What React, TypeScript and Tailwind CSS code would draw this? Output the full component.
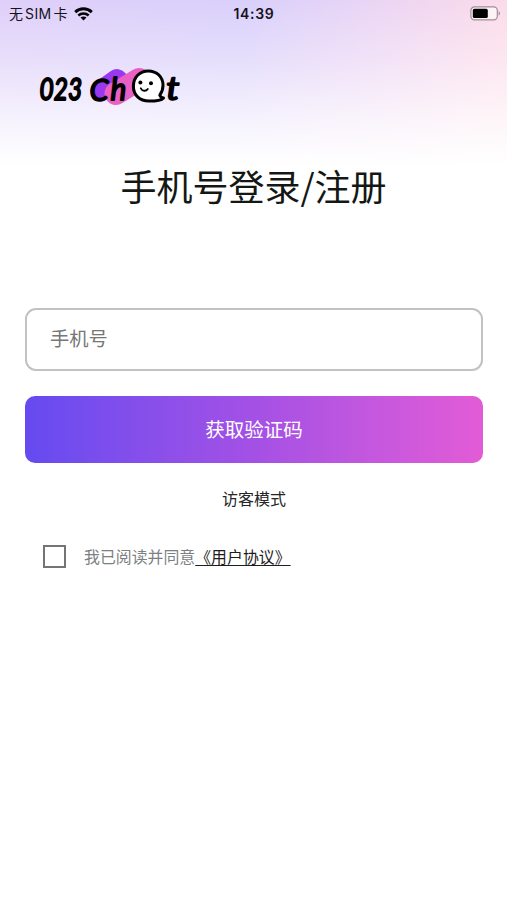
import { useState } from "react";

const WifiIcon = () => (
    <svg className="w-[19px] h-[14px]" viewBox="0 0 19 14" fill="none" stroke="#050307" strokeWidth="2.9">
        <path d="M1.2 5.1C5.9 0.7 13.1 0.7 17.8 5.1" />
        <path d="M4.3 8.5C7.3 5.8 11.7 5.8 14.7 8.5" strokeWidth="2.5" />
        <path d="M9.5 13.6L6.5 10.6C8.2 9.1 10.8 9.1 12.5 10.6Z" fill="#050307" stroke="none" />
    </svg>
);

const BatteryIcon = () => (
    <svg className="w-[31px] h-[15px]" viewBox="0 0 31 15" fill="none">
        <rect x="0.9" y="0.9" width="26.4" height="13" rx="3.6" fill="#fdf3f7" stroke="#9f8f98" strokeWidth="1.2" />
        <rect x="2.8" y="2.8" width="15" height="9.2" rx="1.6" fill="#000" />
        <path d="M28.6 5.2C30.4 5.8 30.4 9 28.6 9.6Z" fill="#9f8f98" />
    </svg>
);

const Logo = () => (
    <svg
        className="w-[148px] h-[54px]"
        viewBox="38 59 148 54"
        fontFamily="Lato, 'Noto Sans', sans-serif"
        fontStyle="italic"
        fontWeight="400"
        strokeLinejoin="round"
        strokeLinecap="round"
    >
        {/* 말풍선 뒤 배경 */}
        <path d="M117 79.5L101 91" stroke="#9a38f0" strokeWidth="21" />
        <path d="M139 79.5L116 93.5" stroke="#ea5fc3" strokeWidth="23" />
        <g fill="#000" stroke="#000" fontSize="31">
            <text transform="translate(39.6 99.8) scale(0.79 1)" strokeWidth="2">023</text>
            <text transform="translate(89.4 101) scale(0.98 1)" strokeWidth="1.6">C</text>
            <text transform="translate(110.5 100.3) scale(0.96 1)" strokeWidth="1.8">h</text>
            <text transform="translate(166.2 100) scale(1.2 1.03)" strokeWidth="1.6">t</text>
        </g>
        {/* 캐릭터 */}
        <path
            d="M148.2 70.9C157 70.9 163 77 163 85.3C163 89.5 161.6 92.6 159.8 95.2C160.4 96.8 161.8 97.6 163.5 97.9C161 100.8 156 101.1 149 101.1C139.5 101.1 133.4 94.9 133.4 86.3C133.4 77.5 139.6 70.9 148.2 70.9Z"
            fill="#fff"
            stroke="#000"
            strokeWidth="3"
        />
        <circle cx="140.4" cy="82.4" r="2" fill="#000" />
        <circle cx="151" cy="83.3" r="2" fill="#000" />
        <path d="M140.8 88.3C142.3 91.3 146 91.6 147.8 88.9" fill="none" stroke="#000" strokeWidth="1.8" />
    </svg>
);

const App = () => {
    const [phone, setPhone] = useState("");
    const [isAgreed, setIsAgreed] = useState(false);

    return (
        <div className="w-full min-h-[900px] bg-white bg-[linear-gradient(to_bottom,transparent_0px,rgba(255,255,255,0.32)_60px,rgba(255,255,255,0.7)_115px,#fff_165px),linear-gradient(100deg,#dfcff9_0%,#d9d0fb_38%,#ecd5f4_58%,#fbdbe9_76%,#f9e2e5_100%)] font-['Inter','Noto_Sans_CJK_SC',sans-serif]">
            {/* 상태바 */}
            <div className="h-7 pl-[9px] pr-[6px] grid grid-cols-3 items-center text-sm text-[#17121d]">
                <div className="flex items-center gap-[6px]">
                    <span className="flex items-center gap-[2px] whitespace-nowrap">
                        无<span className="tracking-[0.4px]">SIM</span>卡
                    </span>
                    <WifiIcon />
                </div>
                <div className="pr-[2px] text-center font-semibold tracking-[0.7px]">14:39</div>
                <div className="flex justify-end pb-[2px]">
                    <BatteryIcon />
                </div>
            </div>

            <div className="pt-[31px] pl-[38px]">
                <Logo />
            </div>

            <h1 className="mt-[45px] text-center text-[36px] leading-[54px] text-[#141814] font-['Noto_Sans_CJK_SC',sans-serif]">
                手机号登录/注册
            </h1>

            <div className="pl-[25px] pr-[24px] mt-[96px] font-['Noto_Sans_CJK_SC',sans-serif]">
                <input
                    type="tel"
                    value={phone}
                    onChange={(e) => setPhone(e.target.value)}
                    placeholder="手机号"
                    className="block w-full h-[63px] px-[23px] pb-1 rounded-[11px] border-2 border-[#c2c2c2] bg-white text-[19.3px] placeholder:text-[#777] outline-none"
                />
                <button className="block w-full h-[67px] mt-[25px] pb-px rounded-[10px] bg-linear-to-r from-[#654af0] via-[#a450e5] to-[#e35bd6] text-[19.5px] text-white">
                    获取验证码
                </button>
                <button className="block mx-auto mt-[23px] text-base leading-6 text-[#262626]">访客模式</button>

                {/* 약관 동의 */}
                <label className="flex items-center mt-[34px] pl-[18px] text-[15.9px] leading-6 text-[#7c8082]">
                    <input
                        type="checkbox"
                        checked={isAgreed}
                        onChange={(e) => setIsAgreed(e.target.checked)}
                        className="appearance-none size-[23px] mr-[18px] border-2 border-[#747474] checked:bg-[#654af0]"
                    />
                    <span className="pt-px">
                        我已阅读并同意
                        <span className="text-[#1d1d1d] underline underline-offset-2">《用户协议》</span>
                    </span>
                </label>
            </div>
        </div>
    );
};

export default App;
